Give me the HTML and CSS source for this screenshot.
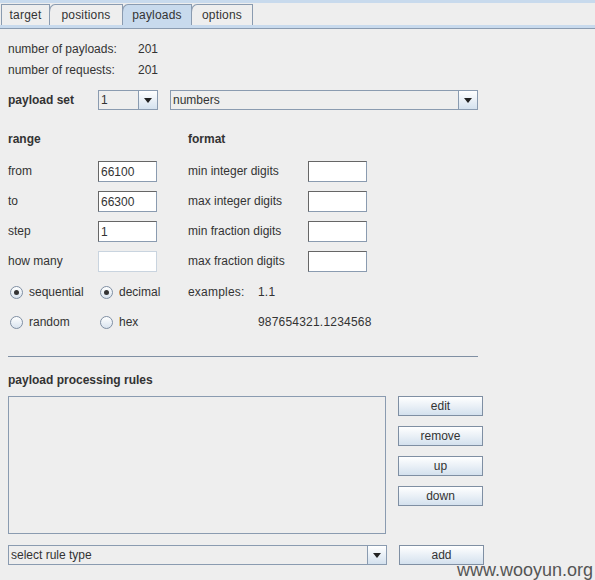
FILE: index.html
```html
<!DOCTYPE html>
<html lang="en">
<head>
  <meta charset="UTF-8">
  <title>Intruder payloads</title>
  <link rel="stylesheet" href="styles.css">
</head>
<body>
  <div class="tab-bar">
    <div class="tab tab-target">target</div>
    <div class="tab tab-positions">positions</div>
    <div class="tab tab-payloads selected">payloads</div>
    <div class="tab tab-options">options</div>
  </div>

  <div class="panel">
    <div class="info-row"><span class="info-label">number of payloads:</span><span>201</span></div>
    <div class="info-row"><span class="info-label">number of requests:</span><span>201</span></div>

    <div class="set-row">
      <span class="bold set-label">payload set</span>
      <div class="combo combo-small"><span class="combo-text">1</span><span class="combo-arrow"></span></div>
      <div class="combo combo-wide"><span class="combo-text">numbers</span><span class="combo-arrow"></span></div>
    </div>

    <div class="heads">
      <span class="bold head-range">range</span>
      <span class="bold">format</span>
    </div>

    <div class="grid">
      <span>from</span>
      <div class="field">66100</div>
      <span>min integer digits</span>
      <div class="field white"></div>

      <span>to</span>
      <div class="field">66300</div>
      <span>max integer digits</span>
      <div class="field white"></div>

      <span>step</span>
      <div class="field">1</div>
      <span>min fraction digits</span>
      <div class="field white"></div>

      <span>how many</span>
      <div class="field disabled"></div>
      <span>max fraction digits</span>
      <div class="field white"></div>

      <label class="radio"><span class="dot on"></span>sequential</label>
      <label class="radio"><span class="dot on"></span>decimal</label>
      <span class="examples"><span class="ex-label">examples:</span>1.1</span>

      <label class="radio"><span class="dot"></span>random</label>
      <label class="radio"><span class="dot"></span>hex</label>
      <span class="examples"><span class="ex-label"></span>987654321.1234568</span>
    </div>

    <div class="separator"></div>

    <div class="bold rules-title">payload processing rules</div>

    <div class="rules">
      <div class="rule-list"></div>
      <div class="rule-buttons">
        <button class="btn">edit</button>
        <button class="btn">remove</button>
        <button class="btn">up</button>
        <button class="btn">down</button>
      </div>
    </div>

    <div class="add-row">
      <div class="combo combo-rule"><span class="combo-text">select rule type</span><span class="combo-arrow"></span></div>
      <button class="btn">add</button>
    </div>
  </div>

  <div class="watermark">www.wooyun.org</div>
</body>
</html>
```

FILE: styles.css
```css
body {
  margin: 0;
  background-color: #eeeeee;
  color: #333;
  font-family: 'Liberation Sans', Arial, sans-serif;
  font-size: 12px;
  width: 595px;
  height: 580px;
  position: relative;
  overflow: hidden;
}

.bold {
  font-weight: bold;
}

/* tabs */
.tab-bar {
  display: flex;
  padding-top: 4px;
  background: linear-gradient(#c8daed 0, #c8daed 3px, #eeeeee 3px);
  border-bottom: 3px solid #c8daed;
  box-shadow: 0 1px 0 #8a9bb0;
  padding-left: 1px;
}

.tab {
  height: 21px;
  line-height: 20px;
  text-align: center;
  letter-spacing: 0.2px;
  border: 1px solid #8a9bb0;
  border-bottom: none;
  border-top-left-radius: 6px 8px;
  background-color: #eeeeee;
  margin-left: -1px;
  box-sizing: border-box;
}

.tab-target {
  width: 49px;
  border-top-left-radius: 0;
  margin-left: 0;
}

.tab-positions {
  width: 74px;
}

.tab-payloads {
  width: 70px;
}

.tab-options {
  width: 62px;
}

.tab.selected {
  background-color: #c8daed;
}

/* content */
.panel {
  padding: 10px 8px 0 8px;
}

.info-row {
  height: 21px;
  line-height: 22px;
  display: flex;
}

.info-label {
  width: 130px;
}

.set-row {
  display: flex;
  align-items: center;
  height: 20px;
  margin-top: 10px;
}

.set-label {
  width: 90px;
}

.combo {
  height: 18px;
  border: 1px solid #8a9bb0;
  background-color: #eeeeee;
  display: flex;
  align-items: center;
  box-sizing: content-box;
}

.combo-text {
  flex: 1;
  padding-left: 2px;
}

.combo-arrow {
  width: 18px;
  height: 18px;
  border-left: 1px solid #8a9bb0;
  background: linear-gradient(#ffffff, #d4e1ee);
  position: relative;
}

.combo-arrow::after {
  content: "";
  position: absolute;
  left: 5px;
  top: 7px;
  border-left: 4px solid transparent;
  border-right: 4px solid transparent;
  border-top: 5px solid #222;
}

.combo-small {
  width: 58px;
}

.combo-wide {
  width: 306px;
  margin-left: 12px;
}

.heads {
  display: flex;
  height: 20px;
  line-height: 20px;
  margin-top: 19px;
}

.head-range {
  width: 180px;
}

.grid {
  display: grid;
  grid-template-columns: 90px 90px 120px 59px;
  grid-auto-rows: 30px;
  align-items: center;
  margin-top: 7px;
  line-height: 16px;
}

.field {
  width: 59px;
  height: 21px;
  line-height: 20px;
  box-sizing: border-box;
  border: 1px solid #8a9bb0;
  border-top-color: #666;
  border-left-color: #666;
  background-color: #ffffff;
  padding-left: 2px;
}

.field.disabled {
  border-color: #c9d4df;
}

.radio {
  display: flex;
  align-items: center;
  padding-left: 2px;
  padding-top: 2px;
}

.dot {
  width: 11px;
  height: 11px;
  border-radius: 50%;
  border: 1px solid #7f8fa3;
  background: linear-gradient(#ffffff, #d8e3ee);
  margin-right: 6px;
  position: relative;
}

.dot.on::after {
  content: "";
  position: absolute;
  left: 3px;
  top: 3px;
  width: 5px;
  height: 5px;
  border-radius: 50%;
  background-color: #333;
}

.examples {
  grid-column: span 2;
  display: flex;
  white-space: nowrap;
  letter-spacing: 0.2px;
  padding-top: 2px;
}

.ex-label {
  width: 70px;
  flex-shrink: 0;
}

.separator {
  margin-top: 20px;
  width: 470px;
  border-top: 1px solid #7f8fa3;
}

.rules-title {
  height: 20px;
  line-height: 20px;
  margin-top: 13px;
}

.rules {
  display: flex;
  margin-top: 6px;
}

.rule-list {
  width: 376px;
  height: 136px;
  border: 1px solid #8a9bb0;
  background-color: #eeeeee;
}

.rule-buttons {
  display: flex;
  flex-direction: column;
  gap: 10px;
  margin-left: 12px;
}

.btn {
  width: 85px;
  height: 20px;
  border: 1px solid #7f8fa3;
  background: linear-gradient(#ffffff, #d4e1ee);
  font-family: 'Liberation Sans', Arial, sans-serif;
  font-size: 12px;
  color: #333;
  padding: 0;
}

.add-row {
  display: flex;
  align-items: center;
  margin-top: 11px;
}

.combo-rule {
  width: 377px;
  margin-right: 12px;
}

.watermark {
  position: absolute;
  right: 2px;
  bottom: 0;
  font-size: 18px;
  color: #555;
  line-height: 20px;
}
```
